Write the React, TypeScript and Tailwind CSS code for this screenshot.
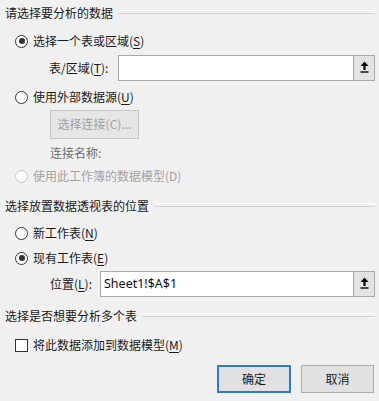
import React from 'react';

const font = { fontFamily: '"Noto Sans CJK SC", "Noto Sans", sans-serif' };

function Header({ text, className = '' }: { text: string; className?: string }) {
  return (
    <div className={`flex items-center h-[24px] pl-[5px] pr-[4px] ${className}`}>
      <span className="text-[12px] text-[#1a1a1a] whitespace-nowrap">{text}</span>
      <div className="flex-1 ml-[5px] -mt-[3px] flex flex-col">
        <div className="h-px bg-[#fdfdfd]" />
        <div className="h-[2px]" />
        <div className="h-px bg-[#d5d5d5]" />
      </div>
    </div>
  );
}

function Radio({ checked, disabled }: { checked?: boolean; disabled?: boolean }) {
  return (
    <span
      className={`w-[13px] h-[13px] rounded-full border bg-white flex items-center justify-center shrink-0 ${
        disabled ? 'border-[#c4c4c4]' : 'border-[#333333]'
      }`}
    >
      {checked && <span className="w-[6px] h-[6px] rounded-full bg-[#333333]" />}
    </span>
  );
}

function Key({ k }: { k: string }) {
  return (
    <>
      (<span className="underline underline-offset-2">{k}</span>)
    </>
  );
}

function RadioRow({
  label,
  k,
  checked,
  disabled,
  className = '',
}: {
  label: string;
  k: string;
  checked?: boolean;
  disabled?: boolean;
  className?: string;
}) {
  return (
    <div className={`flex items-center h-[24px] pl-[15px] gap-[5px] ${className}`}>
      <Radio checked={checked} disabled={disabled} />
      <span className={`text-[12px] ${disabled ? 'text-[#a3a3a3]' : 'text-[#1a1a1a]'}`}>
        {label}
        {disabled ? `(${k})` : <Key k={k} />}
      </span>
    </div>
  );
}

function UpArrow() {
  return (
    <svg width="9" height="12" viewBox="0 0 9 12">
      <path d="M4.5 0.5 L8.5 5 L5.6 5 L5.6 9 L3.4 9 L3.4 5 L0.5 5 Z" fill="#000" />
      <rect x="0.5" y="10.3" width="8" height="1.4" fill="#000" />
    </svg>
  );
}

function RefInput({ value, className = '' }: { value?: string; className?: string }) {
  return (
    <div className={`flex h-[26px] ${className}`}>
      <div
        className="flex-1 bg-white border border-[#a8a8a8] flex items-center pl-[3px] text-[12.5px] text-[#111]"
        style={{ fontFamily: '"Noto Sans", sans-serif' }}
      >
        {value}
      </div>
      <div className="w-[21px] bg-[#e3e3e3] border border-[#a8a8a8] border-l-0 flex items-start justify-center pt-[5px]">
        <UpArrow />
      </div>
    </div>
  );
}

export default function App() {
  return (
    <div className="w-[379px] h-[401px] bg-[#f0f0f0] overflow-hidden flex flex-col" style={font}>
      <Header text="请选择要分析的数据" className="mt-[1px]" />
      <RadioRow label="选择一个表或区域" k="S" checked className="mt-[4px]" />

      <div className="flex items-center mt-[2px] pr-[4px]">
        <span className="w-[118px] pl-[49px] text-[12px] text-[#1a1a1a]">
          表/区域<Key k="T" />:
        </span>
        <RefInput className="flex-1" />
      </div>

      <RadioRow label="使用外部数据源" k="U" className="mt-[4px]" />

      <div className="pl-[50px] h-[30px] flex items-center">
        <div className="w-[89px] h-[29px] bg-[#e6e6e6] border border-[#c6c6c6] flex items-center justify-center text-[12px] text-[#a0a0a0]">
          选择连接(C)...
        </div>
      </div>

      <div className="h-[23px] flex items-center pl-[50px] mt-[2px] text-[12px] text-[#6d6d6d]">连接名称:</div>

      <RadioRow label="使用此工作簿的数据模型" k="D" disabled />

      <Header text="选择放置数据透视表的位置" className="mt-[6px]" />
      <RadioRow label="新工作表" k="N" className="mt-[3px]" />
      <RadioRow label="现有工作表" k="E" checked className="mt-[1px]" />

      <div className="flex items-center mt-[1px] pr-[4px]">
        <span className="w-[100px] pl-[50px] text-[12px] text-[#1a1a1a]">
          位置<Key k="L" />:
        </span>
        <RefInput value="Sheet1!$A$1" className="flex-1" />
      </div>

      <Header text="选择是否想要分析多个表" className="mt-[7px]" />

      <div className="flex items-center h-[24px] pl-[15px] gap-[5px] mt-[5px]">
        <span className="w-[13px] h-[13px] border border-[#333333] bg-white shrink-0" />
        <span className="text-[12px] text-[#1a1a1a]">
          将此数据添加到数据模型<Key k="M" />
        </span>
      </div>

      <div className="flex justify-end gap-[10px] pr-[5px] mt-[8px]">
        <button className="w-[74px] h-[28px] bg-[#e1e1e1] border-2 border-[#2f7ac4] text-[12px] text-[#1a1a1a]">
          确定
        </button>
        <button className="w-[73px] h-[28px] bg-[#e1e1e1] border border-[#adadad] text-[12px] text-[#1a1a1a]">
          取消
        </button>
      </div>
    </div>
  );
}
